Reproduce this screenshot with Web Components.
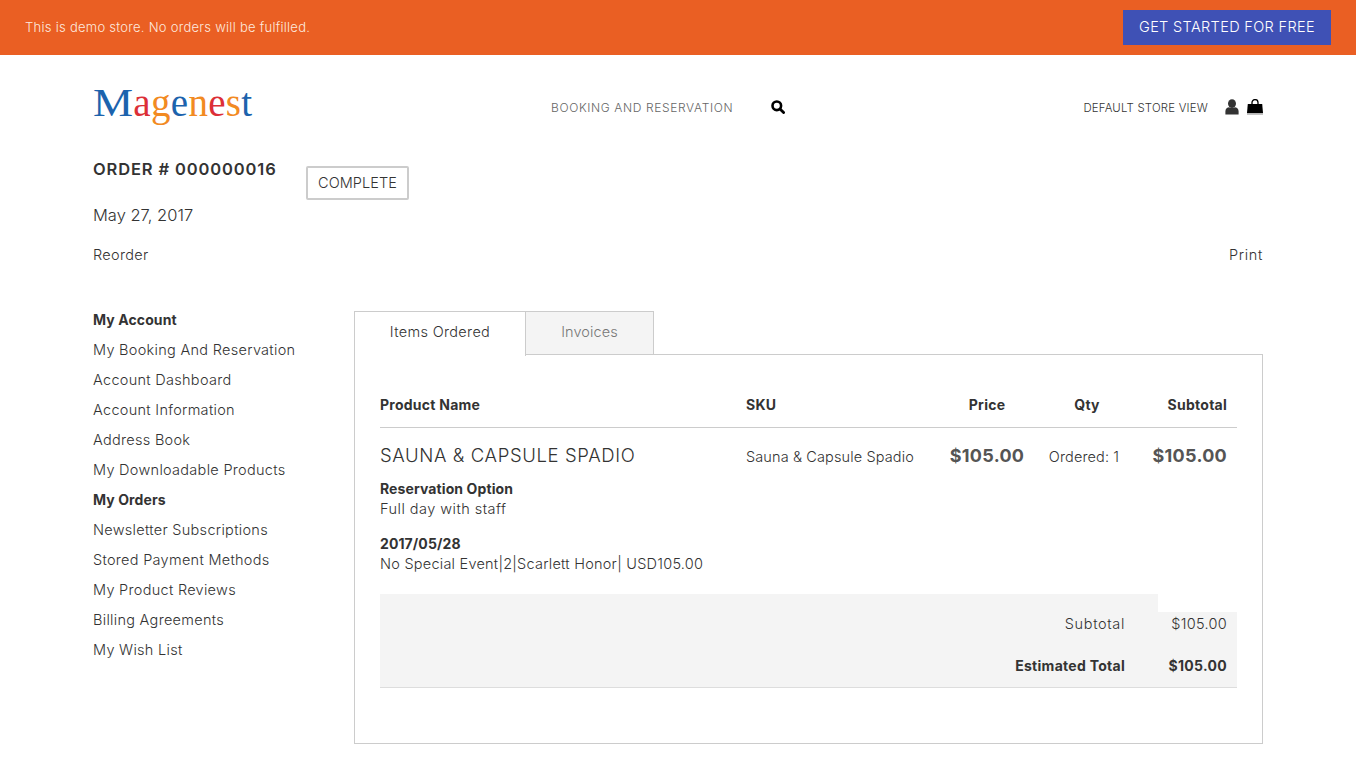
<!DOCTYPE html>
<html><head><meta charset="utf-8"><style>
html,body{margin:0;padding:0;background:#fff}
body{font-family:Inter,"Liberation Sans",sans-serif;color:#333;width:1356px;height:758px;overflow:hidden;font-weight:350}
</style></head><body>
<demo-banner>This is demo store. No orders will be fulfilled.<span slot="cta">GET STARTED FOR FREE</span></demo-banner>
<site-header></site-header>
<order-title></order-title>
<account-layout>
  <account-nav slot="nav"></account-nav>
  <order-panel slot="main"></order-panel>
</account-layout>
<script>
function def(name,html){customElements.define(name,class extends HTMLElement{constructor(){super();this.attachShadow({mode:'open'}).innerHTML=html}})}
def('demo-banner',`<style>
:host{display:flex;align-items:center;justify-content:space-between;height:55px;background:#ea5f23;color:#fff;padding:0 25px;font-size:13px;letter-spacing:.27px}
.t{color:#fde9df;margin-top:-1px}
a{display:block;background:#3f51b5;color:#fff;font-size:14.5px;line-height:34px;height:35px;width:208px;text-align:center;letter-spacing:.35px;font-weight:300}
</style><span class="t"><slot></slot></span><a><slot name="cta"></slot></a>`);
def('site-header',`<style>
:host{display:grid;grid-template-columns:458px 234px 1fr;align-items:center;height:101px;padding:0 93px;box-sizing:border-box;width:1356px}
.logo{font-family:"Liberation Serif",serif;font-size:39px;letter-spacing:.3px;line-height:40px;margin-top:-6px;white-space:nowrap;font-weight:400}
.b{color:#1c63ad}.r{color:#dc2f37}.o{color:#f28a22}
.big{display:inline-block;font-size:41px;transform:scaleX(1.1);transform-origin:left;margin-right:3.6px}
.mid{display:flex;align-items:center;justify-content:space-between;font-size:12px;color:#666;letter-spacing:.63px;margin-top:3px}
.right{display:flex;align-items:center;justify-content:flex-end;font-size:11.4px;color:#333;letter-spacing:.22px;margin-top:4px}
.right span{margin-right:17px}
svg{display:block}
</style>
<div class="logo"><span class="b big">M</span><span class="r">a</span><span class="o">g</span><span class="b">e</span><span class="o">n</span><span class="r">e</span><span class="o">s</span><span class="b">t</span></div>
<div class="mid"><span>BOOKING AND RESERVATION</span>
<svg width="14" height="14" viewBox="0 0 14 14"><circle cx="5.8" cy="5.8" r="4.3" fill="none" stroke="#000" stroke-width="2.6"/><path d="M9 9l3.600 3.600" stroke="#000" stroke-width="2.800" stroke-linecap="round"/></svg></div>
<div class="right" ><span>DEFAULT STORE VIEW</span>
<svg width="14" height="16" viewBox="0 0 14 16" style="margin-right:8px;margin-top:-2px"><ellipse cx="7" cy="4.600" rx="4" ry="4.400" fill="#333"/><path d="M.4 15.400V12.200c0-2.800 2-3.800 3.800-4 1.700 1.200 3.900 1.200 5.600 0 1.800.2 3.800 1.200 3.800 4v3.200z" fill="#333"/></svg>
<svg width="16" height="16" viewBox="0 0 16 16" style="margin-top:-1px"><path d="M5 6V3.600a3 3 0 0 1 6 0V6" fill="none" stroke="#000" stroke-width="1.300"/><path d="M.8 5h14.400l.8 9H0z" fill="#000"/><rect y="14.400" width="16" height="1.100" fill="#888"/></svg></div>`);
def('order-title',`<style>
:host{display:block;padding:0 93px;height:155px;box-sizing:border-box}
.top{display:flex;align-items:flex-start}
h1{margin:0;font-size:16.500px;font-weight:600;line-height:26px;letter-spacing:.87px;width:213px;white-space:nowrap;color:#333}
.st{border:2px solid #ccc;border-radius:2px;font-size:14.500px;line-height:30px;height:30px;padding:0 10px;margin-top:10px;color:#333;letter-spacing:.08px}
.date{font-size:16.500px;line-height:24px;margin-top:3px;letter-spacing:0}
.act{display:flex;justify-content:space-between;font-size:14.500px;line-height:20px;margin-top:18px;letter-spacing:.33px}
.act span+span{letter-spacing:.65px}
</style><div class="top"><h1>ORDER # 000000016</h1><div class="st">COMPLETE</div></div>
<div class="date">May 27, 2017</div><div class="act"><span>Reorder</span><span>Print</span></div>`);
def('account-layout',`<style>:host{display:grid;grid-template-columns:261px 909px;padding:0 93px;box-sizing:border-box;width:1356px}</style><slot name="nav"></slot><slot name="main"></slot>`);
def('account-nav',`<style>
:host{display:block;font-size:14.500px;letter-spacing:.29px;color:#333}
div{line-height:20px;margin-bottom:10px;white-space:nowrap}
b{font-weight:700;font-size:14px;letter-spacing:.1px}
</style>
<div style="margin-top:-1px"><b>My Account</b></div><div>My Booking And Reservation</div><div>Account Dashboard</div><div>Account Information</div><div>Address Book</div><div>My Downloadable Products</div><div><b>My Orders</b></div><div>Newsletter Subscriptions</div><div>Stored Payment Methods</div><div>My Product Reviews</div><div>Billing Agreements</div><div>My Wish List</div>`);
def('order-panel',`<style>
:host{display:block;font-size:14.500px;color:#333;letter-spacing:.15px}
.tabs{display:flex;height:44px}
.tab{box-sizing:border-box;height:44px;border:1px solid #ccc;text-align:center;line-height:39px;letter-spacing:.1px}
.a{width:172px;border-bottom:0;background:#fff;position:relative;z-index:1;margin-bottom:-1px;height:45px;letter-spacing:.33px}
.i{width:129px;margin-left:-1px;background:#f4f4f4;color:#777}
.box{border:1px solid #ccc;height:390px;box-sizing:border-box;padding:0 25px;margin-top:-1px}
.g{display:grid;grid-template-columns:366px 191px 100px 100px 100px}
.hd{font-weight:700;height:73px;line-height:20px;padding-top:40px;box-sizing:border-box;border-bottom:1px solid #ccc;font-size:14px;letter-spacing:.25px}
.c{text-align:center}.rt{text-align:right;padding-right:10px}
.row{padding-top:15px;height:166px;box-sizing:border-box}
.name{font-size:18.500px;line-height:24px;letter-spacing:.62px;white-space:nowrap}
.sku{line-height:24px;padding-top:2px;white-space:nowrap;letter-spacing:.12px}
.price{font-size:18px;font-weight:700;line-height:24px;color:#555;letter-spacing:.28px;padding-top:1px}
.opt{line-height:20px;margin-top:12px;white-space:nowrap;letter-spacing:.47px}
.opt b{display:block;font-weight:700;font-size:14px;letter-spacing:.1px}
.opt+.opt{margin-top:15px;letter-spacing:.24px}
.tot{display:grid;grid-template-columns:778px 79px;grid-template-rows:94px;height:94px;box-sizing:border-box}
.l{background:#f4f4f4;text-align:right;padding-right:33px;box-sizing:border-box;padding-top:20px;border-bottom:1px solid #ddd}
.v{background:#f4f4f4;margin-top:18px;text-align:right;padding-right:10px;padding-top:2px;box-sizing:border-box;border-bottom:1px solid #ddd;letter-spacing:.28px}
.ln{line-height:20px;margin-bottom:22px}
.ln.b{font-weight:700;font-size:14px;margin-bottom:0;letter-spacing:.28px}
.l .ln:first-child{letter-spacing:.65px}
</style>
<div class="tabs"><div class="tab a">Items Ordered</div><div class="tab i">Invoices</div></div>
<div class="box">
<div class="g hd"><div>Product Name</div><div>SKU</div><div class="c">Price</div><div class="c">Qty</div><div class="rt">Subtotal</div></div>
<div class="g row"><div><div class="name">SAUNA &amp; CAPSULE SPADIO</div>
<div class="opt"><b>Reservation Option</b>Full day with staff</div>
<div class="opt"><b>2017/05/28</b>No Special Event|2|Scarlett Honor| USD105.00</div></div>
<div class="sku">Sauna &amp; Capsule Spadio</div><div class="c price">$105.00</div><div class="c sku" style="padding-right:6px">Ordered: 1</div><div class="rt price">$105.00</div></div>
<div class="tot"><div class="l"><div class="ln">Subtotal</div><div class="ln b">Estimated Total</div></div><div class="v"><div class="ln">$105.00</div><div class="ln b">$105.00</div></div></div>
</div>`);
</script></body></html>
